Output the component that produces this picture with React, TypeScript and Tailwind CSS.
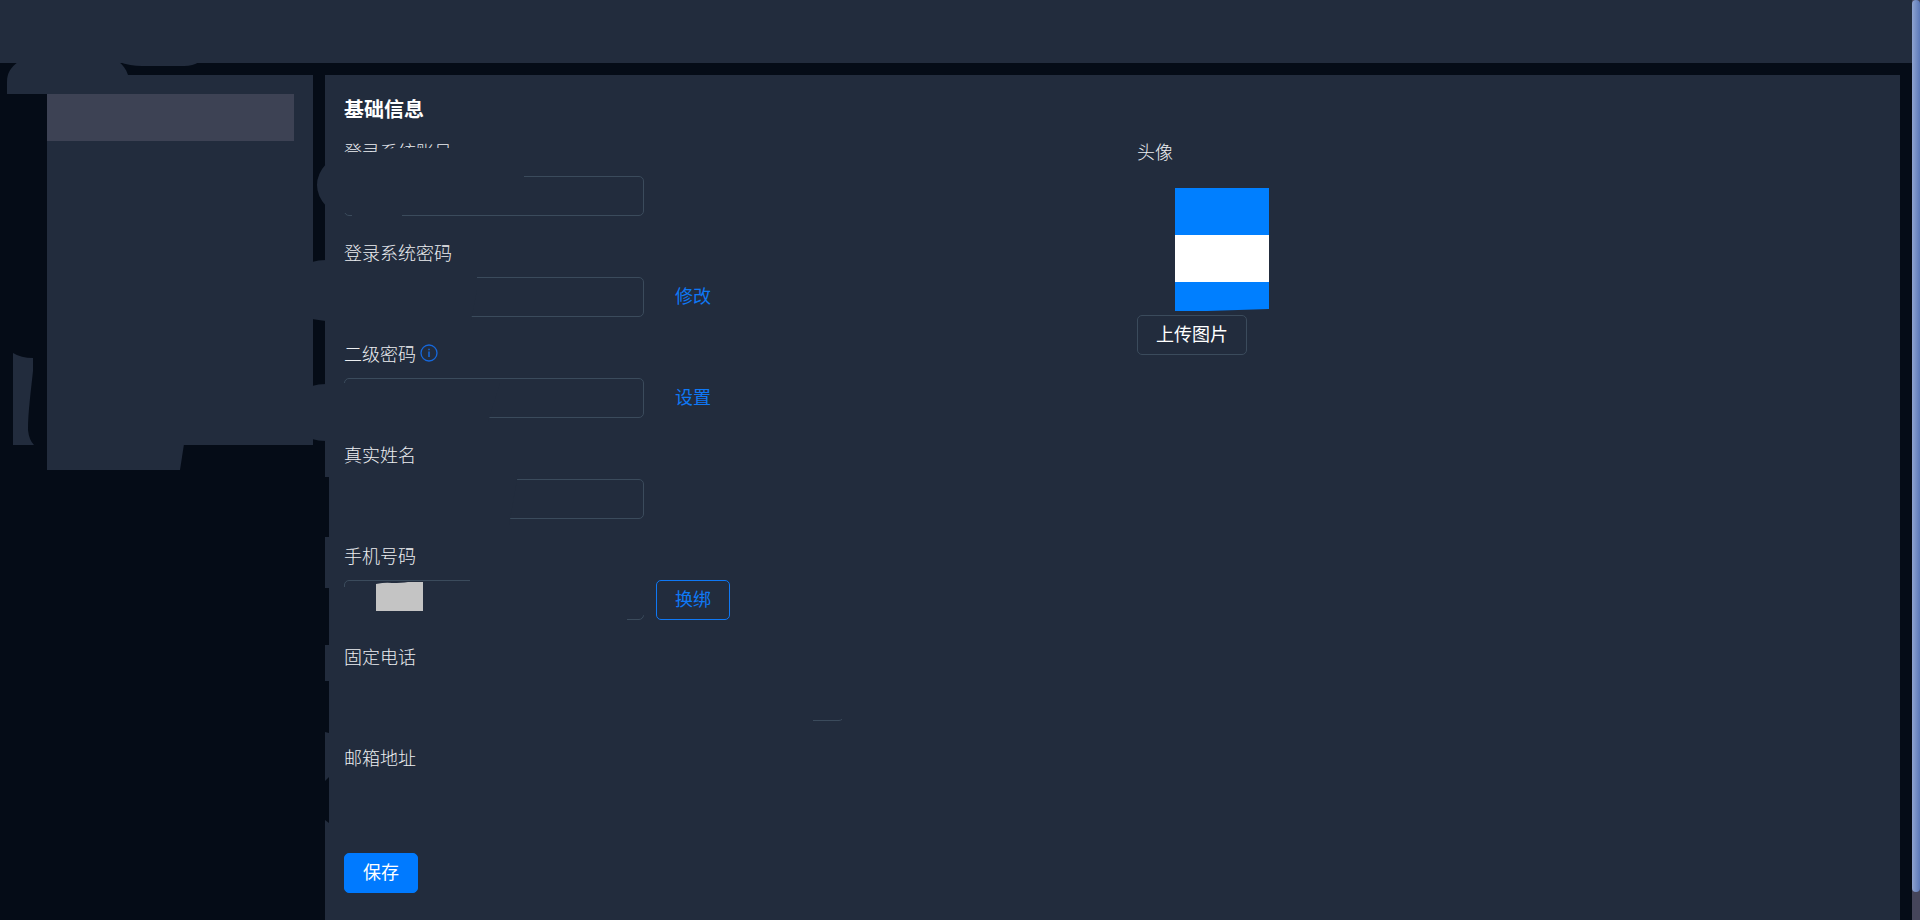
import { ReactNode } from "react";

const labelClass = "flex h-[30px] items-center text-[18px] font-light text-[#eceef1]";
const buttonClass = "h-10 rounded-[5px] border px-[18px] pb-[3px] text-[18px] whitespace-nowrap";

function InfoIcon() {
    return (
        <svg className="size-[18px]" viewBox="0 0 18 18" fill="none" stroke="#1668dc">
            <circle cx="9" cy="9" r="8" strokeWidth="1.3" />
            <path d="M9 7.5v5.5M9 4.8v1.4" strokeWidth="1.5" />
        </svg>
    );
}

function Field({
    id,
    label,
    type = "text",
    wide = false,
    icon,
    children
}: {
    id: string,
    label: string,
    type?: string,
    wide?: boolean,
    icon?: ReactNode,
    children?: ReactNode
}) {
    return (
        <div className="flex flex-col gap-[10px]">
            <div className="flex items-center gap-1">
                <label htmlFor={id} className={labelClass}>{label}</label>
                {icon}
            </div>
            <div className="flex items-center gap-3">
                <input
                    id={id}
                    type={type}
                    className={`h-10 rounded-[5px] border border-[#3b4b5c] bg-transparent px-3 text-[18px] text-white outline-none ${wide ? "w-[500px]" : "w-[300px]"}`}
                />
                {children}
            </div>
        </div>
    );
}

// Panel-coloured brush strokes that hide private data
function Redaction() {
    return (
        <svg
            className="pointer-events-none absolute top-0 left-0 h-[920px] w-[900px]"
            viewBox="0 0 900 920"
            fill="#222c3d"
            aria-hidden="true"
        >
            {/* header and sidebar */}
            <path d="M7 94V82C7 73 11 67 18 62H119C123 65 126 69 128 75H140V94Z" />
            <path d="M119 62Q130 66 142 66H184Q193 66 199 62Z" />
            <path d="M13 353Q21 358 33 358V371C31 390 28 412 28 430Q29 440 34 445H13Z" />
            <path d="M47 444H184L180 470H47Z" />

            {/* gap between sidebar and panel */}
            <path d="M326 164Q317 174 317 185Q317 196 326 206Z" />
            <path d="M312 262Q318 260 326 260V321Q318 320 312 319Z" />
            <path d="M312 386Q318 384 326 384V441Q318 441 312 439Z" />

            {/* fields */}
            <path d="M340 153L351 152H376L379 149L398 148H455V172H524V212H402V222H352V213H340Z" />
            <path d="M340 270H477V290L471 320H340Z" />
            <path d="M340 383H500L488 422H340Z" />
            <path d="M340 474H518L509 525H340Z" />
            <path d="M340 587H376V583H470V577H650V615H644L640 617H627V624H340Z" />
            <path d="M340 676H850V719H843V724H842V719H813V724H340Z" />
            <path d="M340 777H850V826H340Z" />

            {/* notched panel edge */}
            <path fill="#050c17" d="M325 477H329V537H325ZM325 588H329V645H325ZM325 681H329V733L325 732ZM325 781L329 777V823L325 820Z" />
            <path fill="#c4c4c4" d="M376 584Q386 582 392 583Q402 583 408 582H423V611H376Z" />
        </svg>
    );
}

export default function App() {
    return (
        <div className="relative flex h-screen overflow-hidden bg-[#050c17] font-['Noto_Sans_CJK_SC',sans-serif]">
            <div className="flex min-w-0 flex-1 flex-col">
                <header className="h-[63px] shrink-0 bg-[#222c3d]" />

                <div className="flex min-h-0 flex-1 gap-3 pt-3 pr-3">
                    <aside className="w-[313px] shrink-0 pl-[47px]">
                        <nav className="h-[370px] bg-[#222c3d] pt-[19px] pr-[19px]">
                            <div className="h-[47px] bg-[#3d4254]" />
                        </nav>
                    </aside>

                    <main className="min-w-0 flex-1 overflow-hidden bg-[#222c3d] px-[19px] pt-4">
                        <h1 className="mb-[9px] flex h-9 items-center text-[20px] font-bold text-white">基础信息</h1>
                        <form className="grid grid-cols-2 gap-[49px]" onSubmit={(e) => e.preventDefault()}>
                            <div className="flex flex-col gap-[21px]">
                                <Field id="account" label="登录系统账号" />
                                <Field id="password" label="登录系统密码" type="password">
                                    <button type="button" className={`${buttonClass} border-transparent text-[#0f78f5]`}>修改</button>
                                </Field>
                                <Field id="second-password" label="二级密码" type="password" icon={<InfoIcon />}>
                                    <button type="button" className={`${buttonClass} border-transparent text-[#0f78f5]`}>设置</button>
                                </Field>
                                <Field id="real-name" label="真实姓名" />
                                <Field id="mobile" label="手机号码" type="tel">
                                    <button type="button" className={`${buttonClass} border-[#0f78f5] text-[#0f78f5]`}>换绑</button>
                                </Field>
                                <Field id="telephone" label="固定电话" type="tel" wide />
                                <Field id="email" label="邮箱地址" type="email" wide />
                                <div className="pt-[10px]">
                                    <button type="submit" className={`${buttonClass} border-[#007aff] bg-[#007aff] text-white`}>保存</button>
                                </div>
                            </div>

                            <div className="flex flex-col items-start">
                                <span className={labelClass}>头像</span>
                                <svg className="mt-[22px] mb-1 ml-[38px] h-[123px] w-[94px]" viewBox="0 0 94 123" role="img" aria-label="头像">
                                    <path fill="#007fff" d="M0 0H94V121L32 123H0Z" />
                                    <path fill="#fff" d="M0 47H94V94H0Z" />
                                </svg>
                                <button type="button" className={`${buttonClass} border-[#3b4b5c] text-white`}>上传图片</button>
                            </div>
                        </form>
                    </main>
                </div>
            </div>

            {/* scrollbar */}
            <div className="w-2 shrink-0 bg-[#45455a]">
                <div className="h-[97%] rounded-full bg-linear-to-r from-[#8fa3cf] to-[#5b78b8]" />
            </div>

            <Redaction />
        </div>
    );
}
